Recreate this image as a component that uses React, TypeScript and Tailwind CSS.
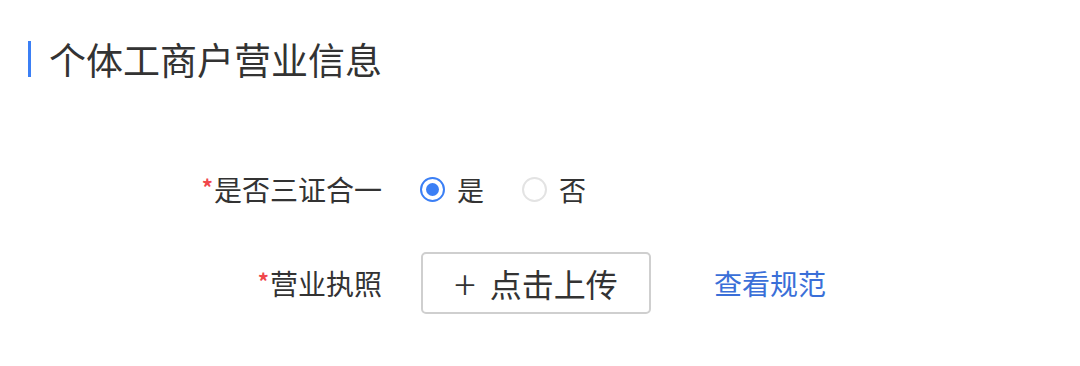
import React, { useState } from 'react'

const font = { fontFamily: '"PingFang SC", "Noto Sans CJK SC", sans-serif' }

function Radio({ checked, label, onClick }: { checked: boolean; label: string; onClick: () => void }) {
  return (
    <button onClick={onClick} className="flex items-center gap-[12px]">
      {checked ? (
        <span className="flex h-[25px] w-[25px] items-center justify-center rounded-full border-[2px] border-[#3b7ff5] bg-white">
          <span className="h-[13px] w-[13px] rounded-full bg-[#3b7ff5]" />
        </span>
      ) : (
        <span className="h-[25px] w-[25px] rounded-full border-[2px] border-[#e3e3e3] bg-white" />
      )}
      <span className="text-[27px] leading-none text-[#333]">{label}</span>
    </button>
  )
}

export default function App() {
  const [sanZheng, setSanZheng] = useState(true)

  return (
    <div className="h-[366px] w-[1080px] bg-white" style={font}>
      {/* 标题 */}
      <div className="flex items-center pl-[28px] pt-[41px]">
        <span className="h-[36px] w-[3px] bg-[#3b7ff5]" />
        <h2 className="ml-[18px] text-[37px] leading-[36px] text-[#333]">个体工商户营业信息</h2>
      </div>

      {/* 表单 */}
      <div className="mt-[94px] flex flex-col">
        <div className="flex h-[36px] items-center">
          <label className="w-[382px] text-right text-[28px] leading-none text-[#333]">
            <span className="mr-[1px] align-top text-[22px] font-bold text-[#f0474b]">*</span>
            是否三证合一
          </label>
          <div className="ml-[38px] flex items-center gap-[38px]">
            <Radio checked={sanZheng} label="是" onClick={() => setSanZheng(true)} />
            <Radio checked={!sanZheng} label="否" onClick={() => setSanZheng(false)} />
          </div>
        </div>

        <div className="mt-[45px] flex items-center">
          <label className="w-[382px] text-right text-[28px] leading-none text-[#333]">
            <span className="mr-[1px] align-top text-[22px] font-bold text-[#f0474b]">*</span>
            营业执照
          </label>
          <button className="ml-[39px] flex h-[62px] w-[230px] items-center justify-center gap-[14px] rounded-[5px] border-[2px] border-[#cfcfcf] bg-white text-[32px] text-[#333]">
            <span className="text-[40px] font-extralight leading-none">+</span>
            <span className="leading-none">点击上传</span>
          </button>
          <a href="#" className="ml-[63px] text-[28px] leading-none text-[#3a6fd8]">
            查看规范
          </a>
        </div>
      </div>
    </div>
  )
}
